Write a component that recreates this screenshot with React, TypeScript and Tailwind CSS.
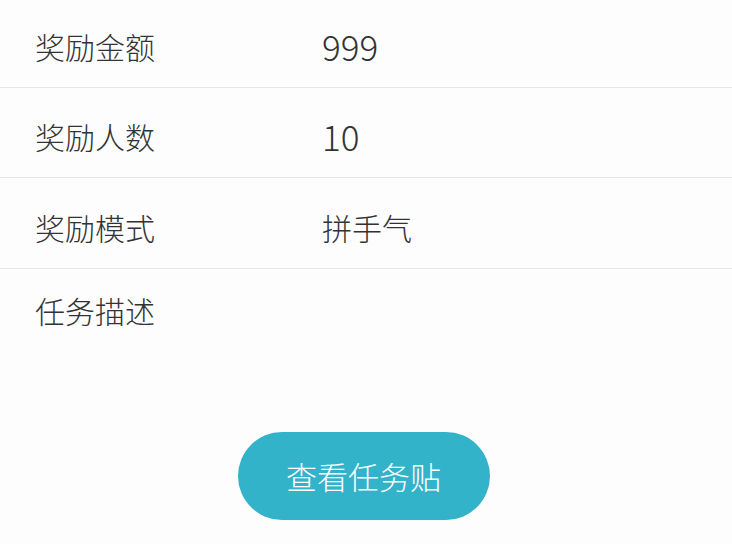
import React from "react";

const font = { fontFamily: '"Noto Sans CJK SC", "Noto Sans", sans-serif' };

function Row({ label, value, h, digits }: { label: string; value: string; h: string; digits?: boolean }) {
  return (
    <div className={`flex items-center border-b-[1.5px] border-[#e6e6e6] ${h}`}>
      <div className="w-[322px] pl-[35px] text-[30px] font-light text-[#333333] leading-none">{label}</div>
      <div
        className={
          digits
            ? "text-[35px] font-light text-[#333333] leading-none"
            : "text-[30px] font-light text-[#333333] leading-none"
        }
      >
        {value}
      </div>
    </div>
  );
}

export default function App() {
  return (
    <div className="w-[732px] h-[544px] bg-[#fdfdfd] overflow-hidden" style={font}>
      <Row label="奖励金额" value="999" digits h="h-[88px] pt-[4px]" />
      <Row label="奖励人数" value="10" digits h="h-[90px] pt-[6px]" />
      <Row label="奖励模式" value="拼手气" h="h-[91px] pt-[7px]" />
      <div className="pl-[35px] pt-[26px] text-[30px] font-light text-[#333333] leading-none">任务描述</div>
      <div className="flex justify-center pt-[107px] pr-[5px]">
        <button className="w-[252px] h-[88px] rounded-full bg-[#33b3ca] text-white text-[31px] font-light leading-none pb-[1px]">
          查看任务贴
        </button>
      </div>
    </div>
  );
}
